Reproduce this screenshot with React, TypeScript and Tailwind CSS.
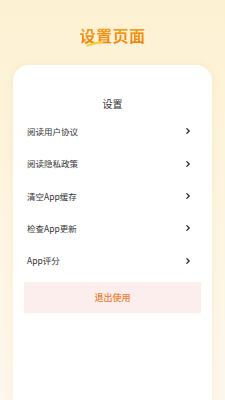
import React from "react";

const items = ["阅读用户协议", "阅读隐私政策", "清空App缓存", "检查App更新", "App评分"];

function Chevron() {
  return (
    <svg width="4" height="6" viewBox="0 0 4 6" className="shrink-0">
      <path d="M0.8 0.6 L3.2 3 L0.8 5.4" fill="none" stroke="#222" strokeWidth="1.2" strokeLinecap="round" strokeLinejoin="round" />
    </svg>
  );
}

export default function App() {
  return (
    <div
      className="w-[225px] h-[400px] overflow-hidden bg-gradient-to-b from-[#fdf1d2] via-[#fdf5e0] to-[#fcf8ed] flex flex-col"
      style={{ fontFamily: '"Noto Sans CJK SC", "Noto Sans", sans-serif' }}
    >
      <div className="h-[65px] flex items-start justify-center pt-[23px]">
        <div className="relative">
          <span className="relative text-[16px] leading-[18px] font-bold tracking-[0.5px] bg-gradient-to-b from-[#f9a72a] to-[#ec7a00] bg-clip-text text-transparent">
            设置页面
          </span>
          <svg className="absolute left-[7px] top-[16px] z-10" width="18" height="8" viewBox="0 0 18 8">
            <path d="M1.5 6.5 C6 4.8 11 3.6 16.5 2.8" fill="none" stroke="#f6cf45" strokeWidth="2.2" strokeLinecap="round" />
          </svg>
        </div>
      </div>
      <div className="mx-[13px] flex-1 bg-white rounded-t-[16px] shadow-[0_0_10px_rgba(240,200,120,0.18)] flex flex-col">
        <div className="pt-[32px] text-center text-[10px] leading-[14px] text-[#333]">设置</div>
        <div className="mt-[4px] flex flex-col">
          {items.map((t) => (
            <div key={t} className="h-[32.4px] flex items-center justify-between pl-[14px] pr-[22px]">
              <span className="text-[8.5px] text-[#333]">{t}</span>
              <Chevron />
            </div>
          ))}
        </div>
        <div className="mx-[11px] mt-[5px] h-[31px] bg-[#fdeeee] flex items-center justify-center">
          <span className="text-[9px] font-medium text-[#ee8032]">退出使用</span>
        </div>
      </div>
    </div>
  );
}
